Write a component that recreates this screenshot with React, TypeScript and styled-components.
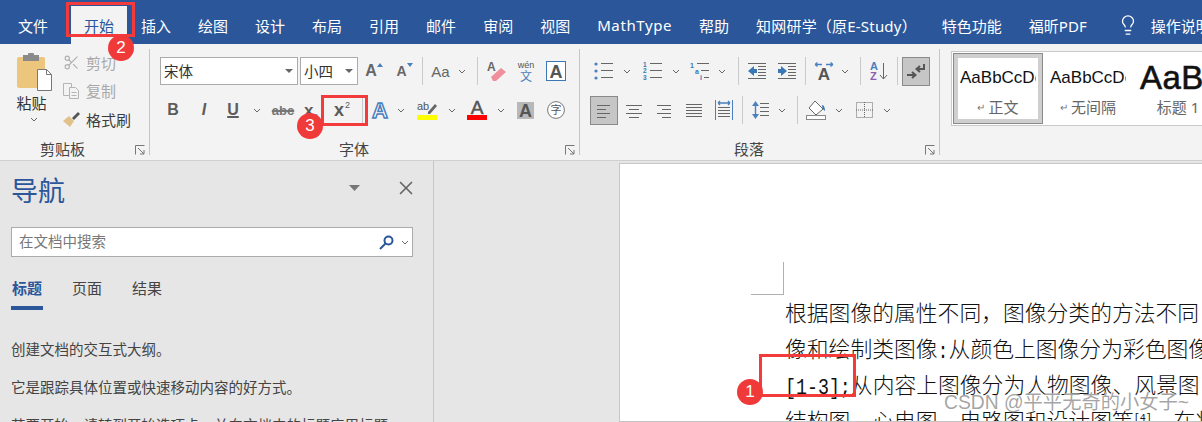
import React from "react";
import styled, { createGlobalStyle } from "styled-components";
import { Lightbulb, X, Scissors } from "lucide-react";

const UI = `"Noto Sans", "Noto Sans CJK SC", sans-serif`;
const BLUE = "#2b579a";
const ICON_BLUE = "#4a80bd";
const GREY = "#5c5c5c";

const Global = createGlobalStyle`
  html, body { margin: 0; padding: 0; background: #e6e6e6; }
  body { font-family: ${UI}; }
  svg { overflow: visible; }
`;

const Shell = styled.div`
  position: relative;
  width: 1202px;
  height: 422px;
  overflow: hidden;
  display: flex;
  flex-direction: column;
`;

const TabBar = styled.nav`
  height: 44px;
  flex: none;
  display: flex;
  align-items: flex-end;
  background: ${BLUE};
  padding-left: 5px;
  white-space: nowrap;
`;

const Tab = styled.div<{ $active?: boolean; $left?: number; $track?: number }>`
  height: 38px;
  box-sizing: border-box;
  padding: 0 13px;
  margin-left: ${(p) => p.$left ?? 0}px;
  display: flex;
  align-items: center;
  gap: 12px;
  font-size: 15px;
  letter-spacing: ${(p) => p.$track ?? 0}px;
  color: ${(p) => (p.$active ? BLUE : "#fff")};
  background: ${(p) => (p.$active ? "#f3f3f3" : "transparent")};
`;

const Ribbon = styled.section`
  height: 117px;
  flex: none;
  box-sizing: border-box;
  display: flex;
  padding: 5px 0;
  background: #f3f3f3;
  border-bottom: 1px solid #cfcfcf;
  overflow: hidden;
`;

const Group = styled.div<{ $w: number; $pad?: number; $last?: boolean }>`
  width: ${(p) => p.$w}px;
  flex: none;
  box-sizing: border-box;
  display: flex;
  flex-direction: column;
  padding-left: ${(p) => p.$pad ?? 0}px;
  border-right: ${(p) => (p.$last ? "none" : "1px solid #c6c6c6")};
`;

const Rows = styled.div`
  flex: 1;
  min-height: 0;
  display: flex;
  flex-direction: column;
  gap: 11px;
  padding-top: 8px;
`;

const Row = styled.div`
  height: 28px;
  display: flex;
  align-items: center;
`;

const Footer = styled.div<{ $labelLeft: number }>`
  height: 20px;
  flex: none;
  display: flex;
  align-items: center;
  padding-left: ${(p) => p.$labelLeft}px;
  padding-right: 4px;
  font-size: 15px;
  color: #444;
  margin-bottom: -3px;
`;

const Launcher = styled.svg`
  width: 10px;
  height: 10px;
  margin-left: auto;
  margin-top: 4px;
`;

const Cell = styled.div<{ $w: number }>`
  width: ${(p) => p.$w}px;
  height: 28px;
  flex: none;
  display: flex;
  align-items: center;
  justify-content: center;
`;

const Pressed = styled.div<{ $left?: number }>`
  width: 28px;
  height: 29px;
  flex: none;
  box-sizing: border-box;
  margin-left: ${(p) => p.$left ?? 0}px;
  display: flex;
  align-items: center;
  justify-content: center;
  background: #c6c6c6;
  border: 1px solid #8a8a8a;
`;

const Sep = styled.div<{ $left?: number }>`
  width: 1px;
  height: 28px;
  flex: none;
  margin-left: ${(p) => p.$left ?? 0}px;
  background: #c9c9c9;
`;

const Combo = styled.div<{ $w: number; $left?: number }>`
  width: ${(p) => p.$w}px;
  height: 28px;
  flex: none;
  box-sizing: border-box;
  margin-left: ${(p) => p.$left ?? 0}px;
  display: flex;
  align-items: center;
  justify-content: space-between;
  padding: 0 4px 2px 3px;
  background: #fff;
  border: 1px solid #ababab;
  font-size: 14.5px;
  color: #333;
`;

const Caret = styled.i`
  width: 0;
  height: 0;
  margin-top: 2px;
  border-left: 4px solid transparent;
  border-right: 4px solid transparent;
  border-top: 4px solid #666;
`;

const Glyph = styled.span<{ $size?: number; $bold?: boolean; $italic?: boolean; $color?: string; $under?: boolean; $strike?: boolean }>`
  font-family: "Liberation Sans", sans-serif;
  font-size: ${(p) => p.$size ?? 16}px;
  font-weight: ${(p) => (p.$bold ? 700 : 400)};
  font-style: ${(p) => (p.$italic ? "italic" : "normal")};
  color: ${(p) => p.$color ?? GREY};
  text-decoration: ${(p) => (p.$under ? "underline" : p.$strike ? "line-through" : "none")};
  text-decoration-thickness: 2px;
  line-height: 1;
`;

const Mini = styled.sup<{ $color?: string }>`
  font-size: 9px;
  color: ${(p) => p.$color ?? GREY};
  font-weight: 400;
  vertical-align: 8px;
  line-height: 0;
  margin-left: 1px;
`;

const Low = styled.sub`
  font-size: 8px;
  color: ${ICON_BLUE};
  font-weight: 400;
  vertical-align: -3px;
  line-height: 0;
`;

/* clipboard */
const ClipWrap = styled.div`
  flex: 1;
  min-height: 0;
  display: flex;
`;

const PasteCol = styled.div`
  width: 63px;
  flex: none;
  display: flex;
  flex-direction: column;
  align-items: center;
  padding: 4px 0 0 4px;
  box-sizing: border-box;
  font-size: 15px;
  color: #333;
  line-height: 20px;
`;

const PasteIcon = styled.svg`
  width: 36px;
  height: 39px;
  flex: none;
  margin-left: 3px;
`;

const PasteLabel = styled.div`
  margin: 1px 0 4px -4px;
`;

const ClipList = styled.div`
  display: flex;
  flex-direction: column;
  margin-top: -1px;
`;

const ClipItem = styled.div<{ $off?: boolean }>`
  height: 28.5px;
  flex: none;
  display: flex;
  align-items: center;
  gap: 7px;
  font-size: 15px;
  color: ${(p) => (p.$off ? "#a9a9a9" : "#3c3c3c")};
`;

const ClipIcon = styled.div`
  width: 16px;
  height: 18px;
  display: flex;
  align-items: center;
  justify-content: center;
`;

/* styles */
const Gallery = styled.div`
  margin-top: 2px;
  width: 262px;
  height: 75px;
  box-sizing: border-box;
  display: flex;
  padding: 1px;
  background: #fff;
  border: 1px solid #c9c9c9;
  overflow: hidden;
`;

const StyleItem = styled.div<{ $on?: boolean }>`
  width: 90px;
  height: 71px;
  flex: none;
  box-sizing: border-box;
  display: flex;
  flex-direction: column;
  align-items: center;
  overflow: hidden;
  padding: ${(p) => (p.$on ? "0" : "5px")};
  background: #fff;
  ${(p) => (p.$on ? "border: 5px solid #cfcfcf; outline: 1px solid #8a8a8a; outline-offset: -1px;" : "")}
`;

const Sample = styled.div<{ $big?: boolean }>`
  width: ${(p) => (p.$big ? 80 : 76)}px;
  height: 39px;
  flex: none;
  overflow: hidden;
  display: flex;
  align-items: center;
  justify-content: flex-start;
  box-sizing: border-box;
  padding-left: ${(p) => (p.$big ? 2 : 0)}px;
  font-family: "Liberation Sans", sans-serif;
  font-size: ${(p) => (p.$big ? 33 : 17)}px;
  font-weight: 400;
  color: #111;
  white-space: nowrap;
  letter-spacing: ${(p) => (p.$big ? "0.5px" : "0")};
  -webkit-text-stroke: ${(p) => (p.$big ? "0.6px #111" : "0")};
`;

const StyleName = styled.div`
  font-size: 15px;
  color: #666;
  line-height: 20px;
  white-space: nowrap;
  display: flex;
  align-items: center;
  gap: 3px;
`;

const ReturnMark = styled.span`
  font-size: 10px;
  color: #777;
`;

/* lower part */
const Lower = styled.div`
  flex: 1;
  display: flex;
  min-height: 0;
`;

const NavPane = styled.aside`
  width: 434px;
  flex: none;
  box-sizing: border-box;
  padding: 0 20px 0 11px;
  background: #e6e6e6;
  border-right: 1px solid #c6c6c6;
  overflow: hidden;
`;

const NavHead = styled.div`
  height: 58px;
  display: flex;
  align-items: center;
  color: ${BLUE};
  font-size: 27px;
  box-sizing: border-box;
  padding-bottom: 2px;
`;

const NavTools = styled.div`
  margin-left: auto;
  display: flex;
  align-items: center;
  gap: 35px;
  margin-right: -4px;
  margin-top: -2px;
`;

const Search = styled.div`
  margin-top: 8px;
  height: 30px;
  box-sizing: border-box;
  display: flex;
  align-items: center;
  padding: 0 3px 0 7px;
  gap: 7px;
  background: #fff;
  border: 1px solid #ababab;
  color: #777;
  font-size: 14.5px;
`;

const SearchText = styled.span`
  flex: 1;
  margin-top: -4px;
`;

const NavTabs = styled.div`
  margin-top: 20px;
  display: flex;
  gap: 28px;
  font-size: 15px;
  color: #444;
`;

const NavTab = styled.div<{ $active?: boolean }>`
  height: 33px;
  width: 32px;
  text-align: center;
  line-height: 22px;
  box-sizing: border-box;
  font-weight: ${(p) => (p.$active ? 700 : 400)};
  color: ${(p) => (p.$active ? BLUE : "#444")};
  border-bottom: ${(p) => (p.$active ? `4px solid ${BLUE}` : "none")};
`;

const Hint = styled.p`
  margin: 0 0 17px;
  font-size: 14.5px;
  line-height: 21px;
  color: #444;
  white-space: nowrap;
`;

const HintList = styled.div`
  padding-top: 29px;
`;

const DocArea = styled.main`
  flex: 1;
  min-width: 0;
  padding: 2px 0 0 185px;
  background: #e6e6e6;
  display: flex;
`;

const Page = styled.div`
  flex: 1;
  min-width: 0;
  background: #fff;
  border: 1px solid #c6c6c6;
  border-right: none;
  overflow: hidden;
`;

const CropMark = styled.div`
  width: 33px;
  height: 33px;
  box-sizing: border-box;
  margin: 98px 0 0 131px;
  border-right: 1px solid #b0b0b0;
  border-bottom: 1px solid #b0b0b0;
`;

const Body = styled.div`
  margin: -1px 0 0 165px;
  font-family: "Noto Sans CJK SC", sans-serif;
  font-weight: 300;
  font-size: 21.8px;
  line-height: 36px;
  color: #111;
  white-space: nowrap;
`;

const Half = styled.span`
  display: inline-block;
  font-family: "Liberation Mono", monospace;
  font-size: 18.3px;
  line-height: 1;
  transform: scaleY(1.25);
`;

const Cite = styled.sup`
  font-family: "Liberation Mono", monospace;
  font-size: 10px;
  line-height: 0;
`;

/* overlays */
const RedBox = styled.div<{ $x: number; $y: number; $w: number; $h: number }>`
  position: absolute;
  left: ${(p) => p.$x}px;
  top: ${(p) => p.$y}px;
  width: ${(p) => p.$w}px;
  height: ${(p) => p.$h}px;
  box-sizing: border-box;
  border: 3px solid #f33b3b;
`;

const Badge = styled.div<{ $x: number; $y: number }>`
  position: absolute;
  left: ${(p) => p.$x}px;
  top: ${(p) => p.$y}px;
  width: 26px;
  height: 26px;
  border-radius: 50%;
  background: #f03a3a;
  color: #fff;
  font-family: "Liberation Sans", sans-serif;
  font-size: 17px;
  line-height: 26px;
  text-align: center;
`;

const Watermark = styled.div`
  position: absolute;
  left: 944px;
  top: 390px;
  font-family: "Liberation Sans", "Noto Sans CJK SC", sans-serif;
  font-size: 19.3px;
  line-height: 26px;
  color: rgba(125, 125, 125, 0.7);
  text-shadow: 0 0 1px #fff;
  white-space: nowrap;
`;

const Chev = () => (
  <svg width="8" height="5" viewBox="0 0 8 5" fill="none" stroke="#666">
    <path d="M1 1l3 3 3-3" />
  </svg>
);

const Lines = ({ spec, color = "#666" }: { spec: [number, number, number][]; color?: string }) => (
  <>
    {spec.map(([x1, x2, y], i) => (
      <line key={i} x1={x1} x2={x2} y1={y + 0.5} y2={y + 0.5} stroke={color} />
    ))}
  </>
);

const LauncherIcon = () => (
  <Launcher viewBox="0 0 10 10" fill="none" stroke="#777">
    <path d="M.5 9.5v-9h9" />
    <path d="M3 3l6 6M9 5v4H5" />
  </Launcher>
);

const AlignIcon = ({ spec }: { spec: [number, number, number][] }) => (
  <svg width="18" height="16" viewBox="0 0 18 16">
    <Lines spec={spec} />
  </svg>
);

const App = () => (
  <Shell>
    <Global />
    <TabBar>
      <Tab>文件</Tab>
      <Tab $active $left={10}>开始</Tab>
      <Tab $left={1}>插入</Tab>
      <Tab $left={1}>绘图</Tab>
      <Tab $left={1}>设计</Tab>
      <Tab $left={1}>布局</Tab>
      <Tab $left={1}>引用</Tab>
      <Tab $left={1}>邮件</Tab>
      <Tab $left={1}>审阅</Tab>
      <Tab $left={1}>视图</Tab>
      <Tab $left={1} $track={0.6}>MathType</Tab>
      <Tab $left={1}>帮助</Tab>
      <Tab $left={1} $track={0.2}>知网研学（原E-Study）</Tab>
      <Tab $left={-1}>特色功能</Tab>
      <Tab $left={1}>福昕PDF</Tab>
      <Tab $left={4}>
        <Lightbulb size={22} strokeWidth={1.4} color="#fff" />
        操作说明搜索
      </Tab>
    </TabBar>

    <Ribbon>
      <Group $w={150}>
        <ClipWrap>
          <PasteCol>
            <PasteIcon viewBox="0 0 36 39">
              <rect x="0" y="4" width="28" height="31" rx="2" fill="#edc67e" />
              <rect x="6" y="2" width="16" height="6" fill="#8a8a8a" />
              <rect x="11" y="0" width="6" height="4" rx="1" fill="#8a8a8a" />
              <path d="M20.5 16.5h9l5 5v16h-14z" fill="#fff" stroke="#777" />
              <path d="M29.5 16.5v5h5" fill="none" stroke="#777" />
            </PasteIcon>
            <PasteLabel>粘贴</PasteLabel>
            <Chev />
          </PasteCol>
          <ClipList>
            <ClipItem $off>
              <ClipIcon><Scissors size={17} strokeWidth={1.6} color="#b0b0b0" /></ClipIcon>
              剪切
            </ClipItem>
            <ClipItem $off>
              <ClipIcon>
                <svg width="17" height="17" viewBox="0 0 17 17" fill="#f3f3f3" stroke="#b5b5b5">
                  <path d="M.5 1.5h8v12h-8z" />
                  <path d="M6.5 5.5h6l3 3v8h-9z" />
                  <path d="M8.5 10.5h5M8.5 13.5h5" />
                </svg>
              </ClipIcon>
              复制
            </ClipItem>
            <ClipItem>
              <ClipIcon>
                <svg width="17" height="15" viewBox="0 0 17 15">
                  <path d="M0 9l6-5 5 5-4 6z" fill="#e0c188" />
                  <path d="M9 6l6-6 2 2-6 6z" fill="#555" />
                </svg>
              </ClipIcon>
              格式刷
            </ClipItem>
          </ClipList>
        </ClipWrap>
        <Footer $labelLeft={40}>
          剪贴板
          <LauncherIcon />
        </Footer>
      </Group>

      <Group $w={430} $pad={10}>
        <Rows>
          <Row>
            <Combo $w={138}>宋体<Caret /></Combo>
            <Combo $w={58} $left={2}>小四<Caret /></Combo>
            <Cell $w={32}>
              <Glyph $size={16} $bold $color="#666">A</Glyph>
              <svg width="6" height="4" viewBox="0 0 6 4" style={{ marginTop: -12 }}><path d="M0 4l3-4 3 4z" fill={ICON_BLUE} /></svg>
            </Cell>
            <Cell $w={29}>
              <Glyph $size={14} $bold $color="#666">A</Glyph>
              <svg width="6" height="4" viewBox="0 0 6 4" style={{ marginTop: -12 }}><path d="M0 0l3 4 3-4z" fill={ICON_BLUE} /></svg>
            </Cell>
            <Sep $left={3} />
            <Cell $w={35}><Glyph $size={15} $color="#666">Aa</Glyph></Cell>
            <Cell $w={8}><Chev /></Cell>
            <Sep $left={11} />
            <Cell $w={38}>
              <svg width="20" height="22" viewBox="0 0 20 22">
                <text x="0" y="11" fontFamily="Liberation Sans" fontSize="12" fontWeight="700" fill="#666">A</text>
                <path d="M4 17L14 8l5 4-10 9H6z" fill="#ef8f9c" />
              </svg>
            </Cell>
            <Cell $w={20}>
              <svg width="18" height="22" viewBox="0 0 18 22">
                <text x="9" y="8" textAnchor="middle" fontFamily="Liberation Sans" fontSize="9" fill="#555">wén</text>
                <text x="9" y="21" textAnchor="middle" fontFamily="Noto Sans CJK SC" fontSize="12" fill={ICON_BLUE}>文</text>
              </svg>
            </Cell>
            <Cell $w={40}>
              <svg width="20" height="20" viewBox="0 0 20 20">
                <rect x=".5" y=".5" width="19" height="19" fill="#fff" stroke="#3a78b5" />
                <text x="10" y="16.5" textAnchor="middle" fontFamily="Liberation Sans" fontSize="18" fontWeight="700" fill="#555">A</text>
              </svg>
            </Cell>
          </Row>
          <Row>
            <Cell $w={26}><Glyph $size={16} $bold>B</Glyph></Cell>
            <Cell $w={36}><Glyph $size={16} $bold $italic>I</Glyph></Cell>
            <Cell $w={22}><Glyph $size={16} $bold $under>U</Glyph></Cell>
            <Cell $w={26}><Chev /></Cell>
            <Cell $w={26}><Glyph $size={13} $bold $strike $color="#777">abc</Glyph></Cell>
            <Cell $w={30}><Glyph $size={17} $bold>x<Low>2</Low></Glyph></Cell>
            <Cell $w={32}><Glyph $size={18} $bold>x<Mini>2</Mini></Glyph></Cell>
            <Sep $left={4} />
            <Cell $w={33}>
              <svg width="20" height="20" viewBox="0 0 20 20">
                <text x="10" y="18" textAnchor="middle" fontFamily="Liberation Sans" fontSize="22" fontWeight="700" fill="#fff" stroke={ICON_BLUE} strokeWidth="1.5">A</text>
              </svg>
            </Cell>
            <Cell $w={10}><Chev /></Cell>
            <Cell $w={42}>
              <svg width="20" height="20" viewBox="0 0 20 20">
                <text x="0" y="10" fontFamily="Liberation Sans" fontSize="11" fill="#555">ab</text>
                <path d="M11 12l7-8 2 2-7 8h-2z" fill="#666" />
                <rect x="0" y="15" width="20" height="5" fill="#ffff00" />
              </svg>
            </Cell>
            <Cell $w={8}><Chev /></Cell>
            <Cell $w={42}>
              <svg width="20" height="20" viewBox="0 0 20 20">
                <text x="10" y="14" textAnchor="middle" fontFamily="Liberation Sans" fontSize="19" fontWeight="400" stroke="#555" strokeWidth=".5" fill="#555">A</text>
                <rect x="0" y="15" width="20" height="5" fill="#ff0000" />
              </svg>
            </Cell>
            <Cell $w={6}><Chev /></Cell>
            <Cell $w={42}>
              <svg width="17" height="17" viewBox="0 0 17 17">
                <rect width="17" height="17" fill="#b8b8b8" />
                <text x="8.5" y="15" textAnchor="middle" fontFamily="Liberation Sans" fontSize="18" fontWeight="700" fill="#555">A</text>
              </svg>
            </Cell>
            <Cell $w={20}>
              <svg width="18" height="18" viewBox="0 0 18 18">
                <circle cx="9" cy="9" r="8.4" fill="#fff" stroke="#777" />
                <text x="9" y="13" textAnchor="middle" fontFamily="Noto Sans CJK SC" fontSize="11" fill="#555">字</text>
              </svg>
            </Cell>
          </Row>
        </Rows>
        <Footer $labelLeft={179}>
          字体
          <LauncherIcon />
        </Footer>
      </Group>

      <Group $w={360} $pad={10}>
        <Rows>
          <Row>
            <Cell $w={28}>
              <svg width="20" height="18" viewBox="0 0 20 18">
                <circle cx="2" cy="2" r="1.6" fill={ICON_BLUE} />
                <circle cx="2" cy="9" r="1.6" fill={ICON_BLUE} />
                <circle cx="2" cy="16" r="1.6" fill={ICON_BLUE} />
                <Lines spec={[[7, 19, 1], [7, 19, 8], [7, 19, 15]]} />
              </svg>
            </Cell>
            <Cell $w={18}><Chev /></Cell>
            <Cell $w={34}>
              <svg width="20" height="18" viewBox="0 0 20 18" fontFamily="Liberation Sans" fontSize="6.5" fontWeight="700" fill="#3a78b5">
                <text x="0" y="5">1</text>
                <text x="0" y="11">2</text>
                <text x="0" y="18">3</text>
                <Lines spec={[[7, 19, 1], [7, 19, 8], [7, 19, 15]]} />
              </svg>
            </Cell>
            <Cell $w={12}><Chev /></Cell>
            <Cell $w={36}>
              <svg width="20" height="18" viewBox="0 0 20 18" fontFamily="Liberation Sans" fontSize="7" fontWeight="700" fill="#3a78b5">
                <text x="0" y="6">1</text>
                <text x="5" y="12">a</text>
                <text x="10" y="18">i</text>
                <Lines spec={[[7, 19, 1], [11, 19, 8], [14, 19, 15]]} />
              </svg>
            </Cell>
            <Cell $w={8}><Chev /></Cell>
            <Sep $left={12} />
            <Cell $w={36}>
              <svg width="19" height="16" viewBox="0 0 19 16">
                <path d="M0 8l6-5v3h3v4H6v3z" fill="#3a78b5" />
                <Lines spec={[[0, 18, 0], [10, 18, 3], [10, 18, 6], [10, 18, 9], [10, 18, 12], [0, 18, 15]]} />
              </svg>
            </Cell>
            <Cell $w={24}>
              <svg width="19" height="16" viewBox="0 0 19 16">
                <path d="M9 8L3 3v3H0v4h3v3z" fill="#3a78b5" />
                <Lines spec={[[0, 18, 0], [10, 18, 3], [10, 18, 6], [10, 18, 9], [10, 18, 12], [0, 18, 15]]} />
              </svg>
            </Cell>
            <Sep $left={6} />
            <Cell $w={36}>
              <svg width="20" height="18" viewBox="0 0 20 18">
                <path d="M1 2.5h7M12 2.5h7M1 2.5l2.5-2M1 2.5l2.5 2M19 2.5l-2.5-2M19 2.5l-2.5 2" stroke={ICON_BLUE} strokeWidth="1.3" fill="none" />
                <text x="10" y="18" textAnchor="middle" fontFamily="Liberation Sans" fontSize="17" fontWeight="700" fill="#555">A</text>
              </svg>
            </Cell>
            <Cell $w={6}><Chev /></Cell>
            <Sep $left={12} />
            <Cell $w={36}>
              <svg width="18" height="20" viewBox="0 0 18 20" fontFamily="Liberation Sans" fontSize="11" fontWeight="700">
                <text x="0" y="9" fill={ICON_BLUE}>A</text>
                <text x="0" y="19" fill="#8a5fb0">Z</text>
                <path d="M13.5 2v16M10 14l3.5 4 3.5-4" stroke="#666" fill="none" />
              </svg>
            </Cell>
            <Sep />
            <Pressed $left={4}>
              <svg width="18" height="14" viewBox="0 0 18 14" fill="none" stroke="#555" strokeWidth="2">
                <path d="M17 0v5h-7M13 2L9.500 5l3.500 3" />
                <path d="M0 11h8M5 8l3.500 3L5 14" />
              </svg>
            </Pressed>
          </Row>
          <Row>
            <Pressed>
              <AlignIcon spec={[[2, 15, 3], [2, 11, 7], [2, 15, 11], [2, 11, 15]]} />
            </Pressed>
            <Cell $w={32}><AlignIcon spec={[[1, 17, 3], [4, 14, 7], [1, 17, 11], [4, 14, 15]]} /></Cell>
            <Cell $w={28}><AlignIcon spec={[[2, 16, 3], [7, 16, 7], [2, 16, 11], [7, 16, 15]]} /></Cell>
            <Cell $w={32}><AlignIcon spec={[[1, 17, 2], [1, 17, 5], [1, 17, 8], [1, 17, 11], [1, 17, 14]]} /></Cell>
            <Cell $w={28}>
              <svg width="18" height="20" viewBox="0 0 18 20">
                <path d="M.5 0v20M17.500 0v20" stroke={ICON_BLUE} />
                <path d="M3 3h12M3 3l2-2M3 3l2 2M15 3l-2-2M15 3l-2 2" stroke={ICON_BLUE} strokeWidth="1.3" fill="none" />
                <Lines spec={[[3, 15, 7], [3, 15, 10], [3, 15, 13], [3, 15, 16]]} />
              </svg>
            </Cell>
            <Sep $left={4} />
            <Cell $w={36}>
              <svg width="18" height="18" viewBox="0 0 18 18">
                <path d="M3.500 2v14" stroke={ICON_BLUE} strokeWidth="1.400" />
                <path d="M0 5l3.500-5L7 5zM0 13l3.500 5L7 13z" fill={ICON_BLUE} />
                <Lines spec={[[8, 17, 2], [8, 17, 6], [8, 17, 10], [8, 17, 14]]} />
              </svg>
            </Cell>
            <Cell $w={6}><Chev /></Cell>
            <Sep $left={12} />
            <Cell $w={36}>
              <svg width="20" height="20" viewBox="0 0 20 20">
                <path d="M9 1l8 8-7 6-7-7z" fill="#fff" stroke="#666" />
                <path d="M16 5c2 0 3 3 3 6-2-1-3-3-3-6z" fill="#3a78b5" />
                <rect x=".5" y="15.500" width="19" height="4" fill="#fff" stroke="#888" />
              </svg>
            </Cell>
            <Cell $w={10}><Chev /></Cell>
            <Cell $w={40}>
              <svg width="17" height="16" viewBox="0 0 17 16" fill="none" stroke="#666" strokeDasharray="1 1">
                <rect x=".5" y=".5" width="16" height="15" />
                <path d="M8.500 0v16M0 8h17" />
              </svg>
            </Cell>
            <Cell $w={6}><Chev /></Cell>
          </Row>
        </Rows>
        <Footer $labelLeft={144}>
          段落
          <LauncherIcon />
        </Footer>
      </Group>

      <Group $w={262} $pad={11} $last>
        <Gallery>
          <StyleItem $on>
            <Sample>AaBbCcDc</Sample>
            <StyleName><ReturnMark>↵</ReturnMark>正文</StyleName>
          </StyleItem>
          <StyleItem>
            <Sample>AaBbCcDc</Sample>
            <StyleName><ReturnMark>↵</ReturnMark>无间隔</StyleName>
          </StyleItem>
          <StyleItem>
            <Sample $big>AaB</Sample>
            <StyleName>标题 1</StyleName>
          </StyleItem>
        </Gallery>
      </Group>
    </Ribbon>

    <Lower>
      <NavPane>
        <NavHead>
          导航
          <NavTools>
            <svg width="11" height="6" viewBox="0 0 11 6"><path d="M0 0h11L5.500 6z" fill="#777" /></svg>
            <X size={22} strokeWidth={1.8} color="#666" />
          </NavTools>
        </NavHead>
        <Search>
          <SearchText>在文档中搜索</SearchText>
          <svg width="15" height="15" viewBox="0 0 15 15" fill="none" stroke={BLUE} strokeWidth="2">
            <circle cx="9.500" cy="5.500" r="4" />
            <path d="M6.500 8.500L1 14" />
          </svg>
          <Chev />
        </Search>
        <NavTabs>
          <NavTab $active>标题</NavTab>
          <NavTab>页面</NavTab>
          <NavTab>结果</NavTab>
        </NavTabs>
        <HintList>
          <Hint>创建文档的交互式大纲。</Hint>
          <Hint>它是跟踪具体位置或快速移动内容的好方式。</Hint>
          <Hint>若要开始，请转到开始选项卡，并向文档中的标题应用标题</Hint>
        </HintList>
      </NavPane>
      <DocArea>
        <Page>
          <CropMark />
          <Body>
            <div>根据图像的属性不同，图像分类的方法不同</div>
            <div>像和绘制类图像<Half>:</Half>从颜色上图像分为彩色图像</div>
            <div><Half>[1-3];</Half>从内容上图像分为人物图像、风景图</div>
            <div>结构图、心电图、电路图和设计图等<Cite>[4]</Cite>，在将</div>
          </Body>
        </Page>
      </DocArea>
    </Lower>

    <RedBox $x={66} $y={2} $w={69} $h={35} />
    <RedBox $x={321} $y={95} $w={47} $h={31} />
    <RedBox $x={759} $y={354} $w={97} $h={43} />
    <Badge $x={108} $y={35}>2</Badge>
    <Badge $x={297} $y={113}>3</Badge>
    <Badge $x={737} $y={379}>1</Badge>
    <Watermark>CSDN @平平无奇的小女子~</Watermark>
  </Shell>
);

export default App;
